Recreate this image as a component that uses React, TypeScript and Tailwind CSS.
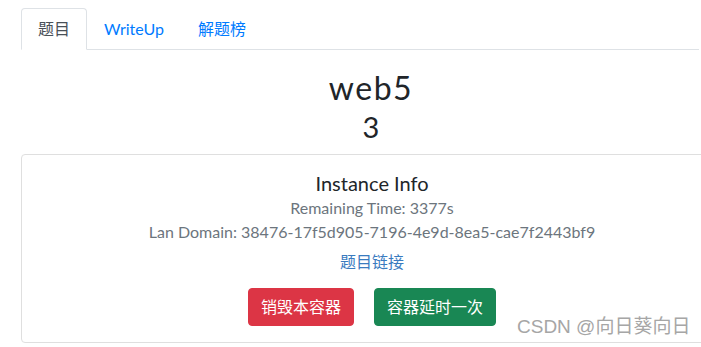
import React from 'react';

const tabs = ['题目', 'WriteUp', '解题榜'];

const App: React.FC = () => {
  return (
    <div
      className="relative w-[701px] h-[347px] overflow-hidden bg-white text-[#212529]"
      style={{ fontFamily: 'Lato, "Noto Sans CJK SC", sans-serif' }}
    >
      <div className="pl-[21px] pt-2">
        {/* tabs */}
        <ul className="flex w-[678px] border-b border-[#dee2e6] text-base">
          {tabs.map((t, i) => (
            <li key={t} className="-mb-px">
              <span
                className={
                  i === 0
                    ? 'block px-4 py-2 leading-6 border border-[#dee2e6] border-b-white rounded-t bg-white text-[#495057]'
                    : 'block px-4 py-2 leading-6 border border-transparent text-[#007bff]'
                }
              >
                {t}
              </span>
            </li>
          ))}
        </ul>

        <div className="w-[700px] text-center">
          <h3 className="mt-[19px] text-[32px] leading-[38px] tracking-[1.5px]">web5</h3>
          <h4 className="mt-[2px] text-[29px] leading-[36px]">3</h4>
        </div>

        {/* instance card */}
        <div className="mt-[9px] w-[702px] border border-[#dfdfdf] rounded p-4 text-center">
          <h5 className="text-[20px] leading-[1.2]">Instance Info</h5>
          <p className="mt-px text-[#6c757d] leading-6">Remaining Time: 3377s</p>
          <p className="text-[#6c757d] leading-6">Lan Domain: 38476-17f5d905-7196-4e9d-8ea5-cae7f2443bf9</p>
          <p className="mt-[6px] leading-6">
            <a className="text-[#3a7bbf]">题目链接</a>
          </p>
          <div className="mt-[14px] flex justify-center gap-5">
            <button className="px-3 py-[6px] leading-6 border border-[#dc3545] rounded bg-[#dc3545] text-white">
              销毁本容器
            </button>
            <button className="px-3 py-[6px] leading-6 border border-[#198754] rounded bg-[#198754] text-white">
              容器延时一次
            </button>
          </div>
        </div>
      </div>

      {/* watermark */}
      <span
        className="absolute left-[517px] top-[314px] text-[19px] leading-[26px] text-[#a6a6a6]"
        style={{ fontFamily: '"Liberation Sans", "Noto Sans CJK SC", sans-serif' }}
      >
        CSDN @向日葵向日
      </span>
    </div>
  );
};

export default App;
